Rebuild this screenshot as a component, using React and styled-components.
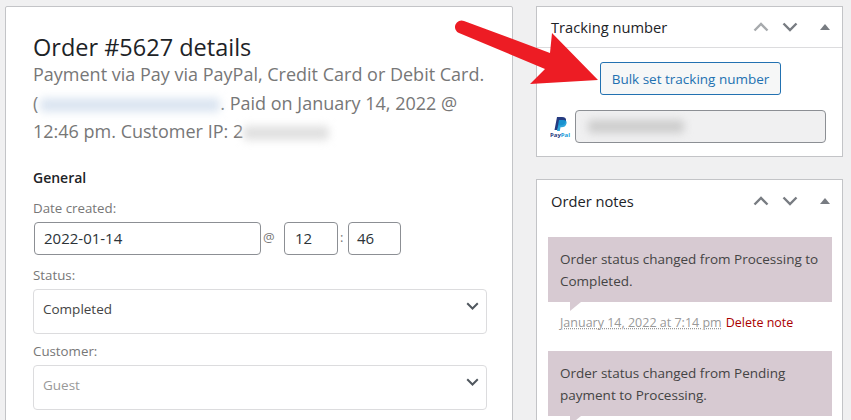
import React from "react";
import styled, { createGlobalStyle } from "styled-components";

const Global = createGlobalStyle`
  html, body { margin: 0; padding: 0; }
  body {
    background: #f0f0f1;
    font-family: "Open Sans", "Noto Sans", sans-serif;
    color: #3c434a;
    overflow: hidden;
  }
  * { box-sizing: border-box; }
`;

const Page = styled.div`
  position: relative;
  width: 851px;
  height: 420px;
  overflow: hidden;
  display: grid;
  grid-template-columns: 508px 307px;
  column-gap: 23px;
  padding: 6px 8px 0 5px;
  align-items: start;
`;

const MainPanel = styled.section`
  height: 440px;
  background: #fff;
  border: 1px solid #c3c4c7;
  border-radius: 2px;
  padding: 27px 25px 0 27px;
`;

const Title = styled.h2`
  margin: 0;
  font-size: 23.5px;
  line-height: 26px;
  font-weight: 400;
  color: #1d2327;
`;

const Meta = styled.p`
  margin: 0;
  font-size: 18px;
  line-height: 28.5px;
  color: #777;
`;

const Blur = styled.span`
  display: inline-block;
  vertical-align: middle;
  width: ${(p) => p.$w}px;
  height: ${(p) => p.$h}px;
  margin-left: ${(p) => p.$ml || 0}px;
  background: ${(p) => p.$c};
  filter: blur(4px);
  border-radius: 4px;
`;

const Heading = styled.h3`
  margin: 22px 0 0;
  font-size: 14px;
  line-height: 20px;
  font-weight: 600;
  color: #1d2327;
`;

const FieldLabel = styled.div`
  margin-top: ${(p) => p.$top}px;
  font-size: 13.3px;
  line-height: 18px;
  color: #777;
`;

const DateRow = styled.div`
  display: flex;
  align-items: center;
  margin: 5px 0 0 1px;
  color: #777;
  font-size: 13px;
`;

const TextBox = styled.div`
  width: ${(p) => p.$w}px;
  height: 33px;
  padding-left: ${(p) => p.$pad}px;
  border: 1px solid #8c8f94;
  border-radius: 4px;
  background: #fff;
  font-size: 15px;
  line-height: 31px;
  color: #2c3338;
`;

const DateSep = styled.span`
  width: ${(p) => p.$w}px;
  padding-left: 2px;
  line-height: 30px;
  align-self: flex-start;
`;

const SelectBox = styled.div`
  position: relative;
  height: 45px;
  margin-top: 5px;
  padding: 9px 9px;
  border: 1px solid #dcdcde;
  border-radius: 4px;
  font-size: 13.5px;
  line-height: 20px;
  color: ${(p) => (p.$muted ? "#999" : "#444")};
  svg {
    position: absolute;
    top: 12px;
    right: 7px;
  }
`;

const SideColumn = styled.div`
  display: flex;
  flex-direction: column;
  gap: 22px;
`;

const Box = styled.section`
  background: #fff;
  border: 1px solid #c3c4c7;
  height: ${(p) => p.$h}px;
`;

const BoxHeader = styled.header`
  height: 41px;
  display: flex;
  align-items: center;
  justify-content: space-between;
  padding: 0 12px 0 14px;
  border-bottom: ${(p) => (p.$line ? "1px solid #dcdcde" : "none")};
`;

const BoxTitle = styled.h2`
  margin: 0;
  font-size: 14.7px;
  font-weight: 400;
  color: #1d2327;
`;

const HeaderIcons = styled.div`
  display: flex;
  align-items: center;
  gap: 13px;
`;

const ToggleArrow = styled.span`
  width: 0;
  height: 0;
  margin-left: 9px;
  border-left: 5px solid transparent;
  border-right: 5px solid transparent;
  border-bottom: 6px solid #787c82;
`;

const TrackingBody = styled.div`
  padding: 14px 16px 0 13px;
  display: flex;
  flex-direction: column;
`;

const BulkButton = styled.button`
  align-self: flex-start;
  margin-left: 50px;
  width: 181px;
  height: 33px;
  padding: 0;
  border: 1px solid #2271b1;
  border-radius: 3px;
  background: #f6f7f7;
  color: #2271b1;
  font-family: inherit;
  font-size: 13.5px;
`;

const TrackingRow = styled.div`
  display: flex;
  align-items: center;
  gap: 4px;
  margin-top: 15px;
`;

const TrackingInput = styled.div`
  flex: 1;
  height: 33px;
  display: flex;
  align-items: center;
  padding-left: 12px;
  border: 1px solid #8c8f94;
  border-radius: 4px;
  background: #f0f0f1;
`;

const NotesBody = styled.div`
  padding: 16px 10px 0 11px;
`;

const Note = styled.div`
  position: relative;
  padding: 11px 12px 10px;
  background: #d7cad2;
  font-size: 13.5px;
  line-height: 22px;
  color: #444;
  &::after {
    content: "";
    position: absolute;
    top: 100%;
    left: 22px;
    border-top: 9px solid #d7cad2;
    border-right: 11px solid transparent;
  }
`;

const NoteMeta = styled.div`
  padding: 12px 12px 19px;
  font-size: 12.5px;
  line-height: 18px;
  white-space: nowrap;
`;

const NoteDate = styled.abbr`
  color: #999;
  text-decoration: underline dotted #999;
`;

const DeleteLink = styled.a`
  margin-left: 4px;
  color: #a00;
`;

const ArrowOverlay = styled.svg`
  position: absolute;
  top: 0;
  left: 0;
  pointer-events: none;
`;

const Chevron = ({ up, color = "#787c82", size = 16 }) => (
  <svg width={size} height={size * 0.625} viewBox="0 0 16 10" fill="none">
    <path
      d={up ? "M1.500 8.500 L8 2 L14.500 8.500" : "M1.500 1.500 L8 8 L14.500 1.500"}
      stroke={color}
      strokeWidth="2.4"
    />
  </svg>
);

const PayPalMark = () => (
  <svg width="21" height="22" viewBox="0 0 21 22">
    <path d="M7 1h5c3 0 4.500 1.500 4 4-.6 3-3 4.500-6 4.500H8.500L7.500 14H4.500z" fill="#253b80" />
    <path d="M9 4h4.500c2.500 0 3.500 1.500 3 3.500-.6 2.700-2.700 3.800-5 3.800h-1L9.800 15H7z" fill="#179bd7" opacity=".9" />
    <text x="0" y="21" fontSize="6" fontWeight="700" fontFamily="Open Sans" fill="#253b80">Pay<tspan fill="#179bd7">Pal</tspan></text>
  </svg>
);

const BoxControls = ({ dim }) => (
  <HeaderIcons>
    <Chevron up color={dim ? "#a7aaad" : "#787c82"} />
    <Chevron color="#787c82" />
    <ToggleArrow />
  </HeaderIcons>
);

export default function App() {
  return (
    <Page>
      <Global />
      <MainPanel>
        <Title>Order #5627 details</Title>
        <Meta>
          Payment via Pay via PayPal, Credit Card or Debit Card.
          <br />(<Blur $w={180} $h={14} $ml={2} $c="#dbe5f1" />. Paid on January 14, 2022 @
          <br />
          12:46 pm. Customer IP: 2<Blur $w={86} $h={14} $c="#e0e0e0" />
        </Meta>
        <Heading>General</Heading>
        <FieldLabel $top={11}>Date created:</FieldLabel>
        <DateRow>
          <TextBox $w={227} $pad={9}>2022-01-14</TextBox>
          <DateSep $w={23}>@</DateSep>
          <TextBox $w={54} $pad={10}>12</TextBox>
          <DateSep $w={10}>:</DateSep>
          <TextBox $w={53} $pad={8}>46</TextBox>
        </DateRow>
        <FieldLabel $top={11}>Status:</FieldLabel>
        <SelectBox>
          Completed
          <Chevron color="#50575e" size={13} />
        </SelectBox>
        <FieldLabel $top={8}>Customer:</FieldLabel>
        <SelectBox $muted>
          Guest
          <Chevron color="#50575e" size={13} />
        </SelectBox>
      </MainPanel>

      <SideColumn>
        <Box $h={151}>
          <BoxHeader $line>
            <BoxTitle>Tracking number</BoxTitle>
            <BoxControls dim />
          </BoxHeader>
          <TrackingBody>
            <BulkButton>Bulk set tracking number</BulkButton>
            <TrackingRow>
              <PayPalMark />
              <TrackingInput>
                <Blur $w={96} $h={13} $c="#cccccc" />
              </TrackingInput>
            </TrackingRow>
          </TrackingBody>
        </Box>
        <Box $h={260}>
          <BoxHeader>
            <BoxTitle>Order notes</BoxTitle>
            <BoxControls />
          </BoxHeader>
          <NotesBody>
            <Note>Order status changed from Processing to Completed.</Note>
            <NoteMeta>
              <NoteDate>January 14, 2022 at 7:14 pm</NoteDate>
              <DeleteLink>Delete note</DeleteLink>
            </NoteMeta>
            <Note>Order status changed from Pending payment to Processing.</Note>
          </NotesBody>
        </Box>
      </SideColumn>

      <ArrowOverlay width="851" height="420" viewBox="0 0 851 420">
        <path d="M464 21 L550 53 L552 33 L598 80 L530 84 L545 69 L459 33 A6.500 6.500 0 0 1 464 21 Z" fill="#ed1c24" />
      </ArrowOverlay>
    </Page>
  );
}
